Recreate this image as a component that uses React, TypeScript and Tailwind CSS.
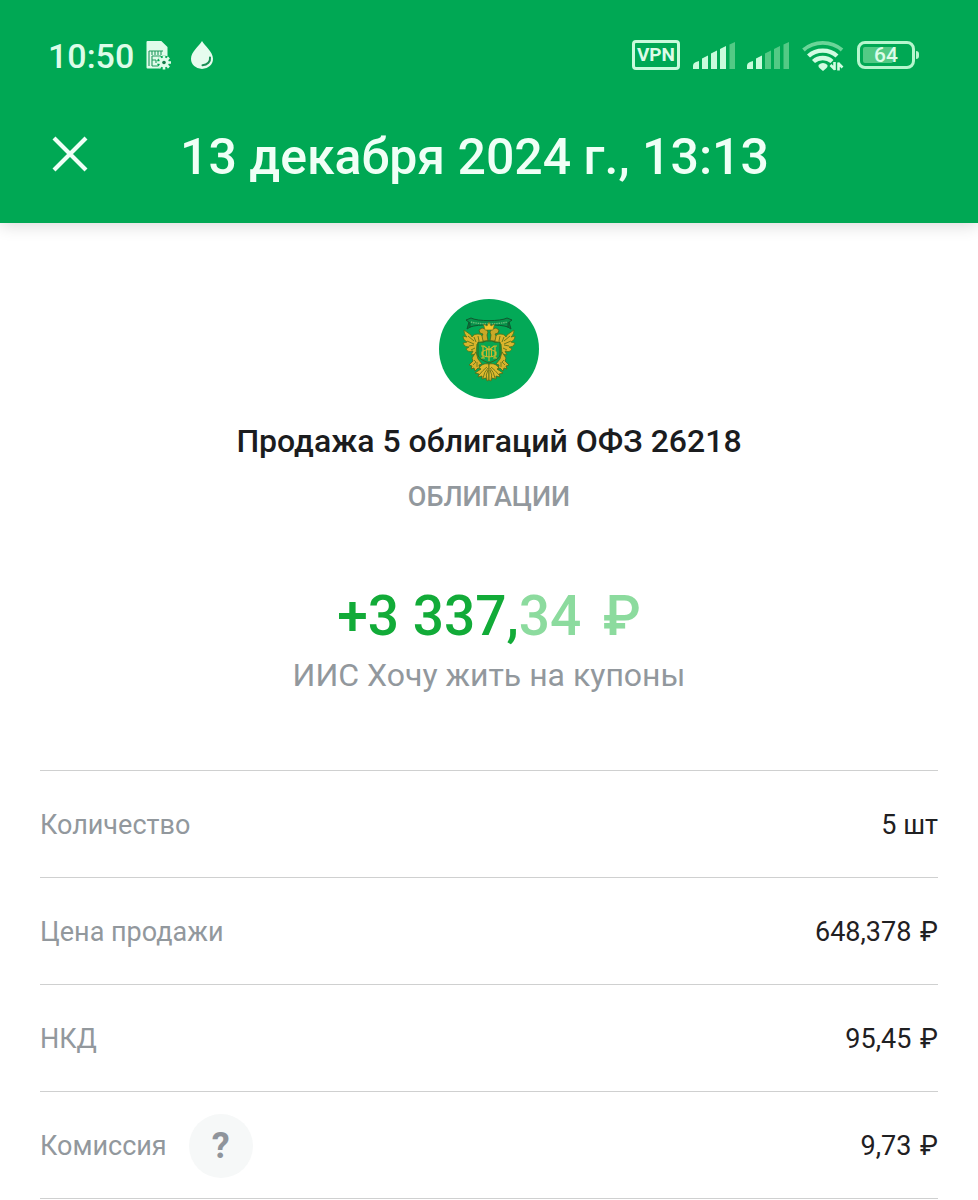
import type { ReactNode } from "react";

const SimIcon = () => (
  <svg viewBox="0 0 26 30" className="h-[30px] w-[26px]" aria-hidden="true">
    <path d="M1.5 1h13.8L21.5 7v21.5h-20a1 1 0 0 1-1-1V2a1 1 0 0 1 1-1z" fill="#e0fbea" />
    <path d="M3 11h14M3 11v15M6 11v4M9 11v4M12 11v4M15 11v4M6 16h9M6 16v10M6 20h4M6 26h6M10 20v3" stroke="#1f9a5c" strokeWidth="1.1" fill="none" />
    <circle cx="18" cy="22.5" r="7" fill="#00a854" />
    <circle cx="18" cy="22.5" r="4.8" fill="#e0fbea" />
    <path d="M18 15.500v14M11 22.500h14M13 17.500l10 10M23 17.500l-10 10" stroke="#e0fbea" strokeWidth="2.6" />
    <circle cx="18" cy="22.5" r="1.8" fill="#147a48" />
  </svg>
);

const DropIcon = () => (
  <svg viewBox="0 0 24 30" className="h-[30px] w-6" aria-hidden="true">
    <path d="M12 1C9 6 1 12 1 18.8a11 10.2 0 0 0 22 0C23 12 15 6 12 1z" fill="#e6fcee" />
    <path d="M20 17.500c.6 4-2.500 7.500-7.500 7.700" stroke="#1a8f55" strokeWidth="2" strokeLinecap="round" fill="none" />
  </svg>
);

const bars = [
  "M1 28v-3q0-3 3-4l3-1v8z",
  "M10 28V17.500l6-3V28z",
  "M19 28V12.500l6-3V28z",
  "M28 28V8l6-3v23z",
  "M37.500 28V3.500l5.500-2.500V28z",
];

const SignalIcon = ({ level }: { level: number }) => (
  <svg viewBox="0 0 44 29" className="h-[29px] w-11" aria-hidden="true">
    {bars.map((d, i) => (
      <path key={d} d={d} fill={i < level ? "#c9fbdc" : "#53ca85"} />
    ))}
  </svg>
);

const WifiIcon = () => (
  <svg viewBox="0 0 42 32" className="h-8 w-[42px]" fill="none" aria-hidden="true">
    <path d="M1.500 11a27 24 0 0 1 38.500 0" stroke="#6bd598" strokeWidth="3.8" />
    <path d="M6.500 17a20 18 0 0 1 28.500 0M11.500 22.500a13 12 0 0 1 18.500 0" stroke="#d2fce2" strokeWidth="4.400" />
    <path d="M16.500 26q4.500-4 9 0 .5 2-1.500 3.500l-3 2.500-3-2.500q-2-1.500-1.500-3.500z" fill="#d2fce2" />
    <path d="M32.500 23v8M33 30.500l-4.500-4.500M36.500 31.500v-8M36 24l4.500 4.500" stroke="#d2fce2" strokeWidth="2.600" />
  </svg>
);

// one half of the eagle, mirrored for the other side
const EagleHalf = () => (
  <g>
    <path
      d="M46 42c-2-4-3-7-7-7-3 0-5 1-6 3l-1-2-7-5c0 3 1 5 3 7l-4-1c0 3 2 5 4 6l-4 1c1 3 3 4 6 4l-3 2c2 3 4 3 7 2l-2 4 5-1 1-10 5-2z"
      fill="#dbb52c"
      stroke="#4d7a1c"
      strokeWidth=".9"
    />
    <path d="M29 37l6 5M28 42l7 3M30 47l5-1M35 38l2 5M39 37l1 5M32 51l4-2" stroke="#5d741a" strokeWidth=".9" fill="none" />
    <path
      d="M40 31l3-2 4 1 2 3-1 3 1 6h-5l-1-5 1-2-3-1z"
      fill="#c9a927"
      stroke="#445f16"
      strokeWidth=".7"
    />
    <path
      d="M37 53l-4 6 1 3-4 4 3 1-1 3 3-1 1 3 3-3 2 1-1-4 3-1-4-5z"
      fill="#d6b12c"
      stroke="#4d6a18"
      strokeWidth=".8"
    />
    <path d="M35 61l2 2-3 3M38 63v5" stroke="#5d741a" strokeWidth=".8" fill="none" />
    <path
      d="M50 65c-5-1-8 1-10 4l2 1-6 4 4 1-1 3 4-1v3l4-1 1 3 2-1z"
      fill="#dfba2e"
      stroke="#4d6a18"
      strokeWidth=".8"
    />
    <path d="M40 76q4-5 8-8M44 79q1-6 5-10M48 81q-2-5 1-10" stroke="#65701a" strokeWidth=".9" fill="none" />
  </g>
);

const Emblem = () => (
  <svg viewBox="0 0 100 100" className="size-[100px]" role="img" aria-label="ОФЗ">
    <circle cx="50" cy="50" r="50" fill="#03a957" />
    <path d="M30 23l-2 7 5-3M70 23l2 7-5-3" fill="#067a3f" stroke="#10582f" strokeWidth="1" />
    <path d="M27 21l5-2c6 3.500 30 3.500 36 0l5 2-4 3v4c-9-3-29-3-38 0v-4z" fill="#07934b" stroke="#10582f" strokeWidth="1" />
    <path d="M32 23c10 2.500 26 2.500 36 0" stroke="#67bd79" strokeWidth="1.400" strokeDasharray="1.5 .8" fill="none" />
    <EagleHalf />
    <g transform="matrix(-1 0 0 1 100 0)">
      <EagleHalf />
    </g>
    <path d="M46 31l-1.500-6 3.500 2 2-4 2 4 3.500-2-1.500 6z" fill="#f0c62d" stroke="#65691a" strokeWidth=".6" />
    <path d="M39 43q6 1 8-1h6q2 2 8 1v13q0 4-11 8-11-4-11-8z" fill="#08a650" stroke="#38651d" strokeWidth="1" />
    <path
      d="M42 47h3l5 4 5-4h3M44 47v12M42 59h4M56 47v12M54 59h4M50 47v15M47.500 50v8M52.500 50v8M43 53q7-5 14 0v3q-7 4-14 0z"
      stroke="#d0b72c"
      strokeWidth="1.2"
      fill="none"
    />
  </svg>
);

const Row = ({ label, value, unit, hint }: { label: string; value: string; unit: string; hint?: ReactNode }) => (
  <div className="flex h-[107px] items-center justify-between border-b border-[#cfd0d0] pt-0.5 text-[27px] leading-8">
    <dt className="flex items-center gap-[22px] text-[#92989d]">
      {label}
      {hint}
    </dt>
    <dd className="text-[#1f2022]">
      {value} <span className={unit === "₽" ? "ml-0.5" : undefined}>{unit}</span>
    </dd>
  </div>
);

const rows = [
  { label: "Количество", value: "5", unit: "шт" },
  { label: "Цена продажи", value: "648,378", unit: "₽" },
  { label: "НКД", value: "95,45", unit: "₽" },
  { label: "Комиссия", value: "9,73", unit: "₽", help: true },
];

const HelpButton = () => (
  <button
    type="button"
    aria-label="Подробнее о комиссии"
    className="flex size-16 items-center justify-center rounded-full bg-[#f6f8f8] text-[36px] leading-8 font-bold text-[#8f949b]"
  >
    ?
  </button>
);

const App = () => {
  return (
    <div className="min-h-screen bg-white font-['Roboto',sans-serif]">
      <header className="bg-[#00a854] shadow-[0_2px_16px_rgba(0,0,0,0.16)]">
        <div className="flex h-[110px] items-center justify-between pr-[59px] pl-12 text-[#dcfce8]">
          <div className="flex items-center">
            <span className="mr-3 pt-0.5 text-[34px] leading-10 font-medium">10:50</span>
            <SimIcon />
            <span className="ml-[18px]">
              <DropIcon />
            </span>
          </div>
          <div className="flex items-center">
            <span className="mr-3 flex h-[30px] w-12 items-center justify-center rounded border-[3px] border-[#c9fbdc] text-[19px] leading-6 font-bold">
              VPN
            </span>
            <span className="mr-[10px]">
              <SignalIcon level={4} />
            </span>
            <span className="mr-3">
              <SignalIcon level={2} />
            </span>
            <span className="mr-[13px]">
              <WifiIcon />
            </span>
            <span className="relative flex h-7 w-[58px] items-center justify-center rounded-lg border-[3px] border-[#b6f6ce] text-[21px] leading-6 font-medium">
              <span className="absolute top-[3px] bottom-[3px] left-[3px] w-[30px] rounded-xs bg-[#53ca85]" />
              <span className="relative">64</span>
            </span>
            <span className="ml-px h-2 w-[3px] rounded-r bg-[#b6f6ce]" />
          </div>
        </div>
        <div className="flex h-[113px] items-start pt-4 pl-[52px]">
          <button type="button" aria-label="Закрыть" className="mt-2.5 mr-[92px]">
            <svg viewBox="0 0 36 36" className="size-9" aria-hidden="true">
              <path d="M2 2l32 32M34 2L2 34" stroke="#f0fff7" strokeWidth="4.2" />
            </svg>
          </button>
          <h1 className="text-[50px] leading-[62px] font-medium text-[#effff6]">13 декабря 2024 г., 13:13</h1>
        </div>
      </header>

      <main className="px-10 pt-[76px]">
        <section className="flex flex-col items-center text-center">
          <Emblem />
          <h2 className="mt-[22px] text-[32px] leading-10 font-medium text-[#1b1c1e]">Продажа 5 облигаций ОФЗ 26218</h2>
          <p className="mt-5 text-[27px] leading-8 font-medium text-[#92989d]">ОБЛИГАЦИИ</p>
          <p className="mt-[70px] text-[55px] leading-[66px] font-medium text-[#12ab38]">
            +3 337,
            <span className="text-[#8cdb9e]">
              34 <span className="ml-2">₽</span>
            </span>
          </p>
          <p className="mt-1.5 text-[32px] leading-10 text-[#92989d]">ИИС Хочу жить на купоны</p>
        </section>

        <dl className="mt-[75px] border-t border-[#cfd0d0]">
          {rows.map((row) => (
            <Row key={row.label} label={row.label} value={row.value} unit={row.unit} hint={row.help && <HelpButton />} />
          ))}
        </dl>
      </main>
    </div>
  );
};

export default App;
